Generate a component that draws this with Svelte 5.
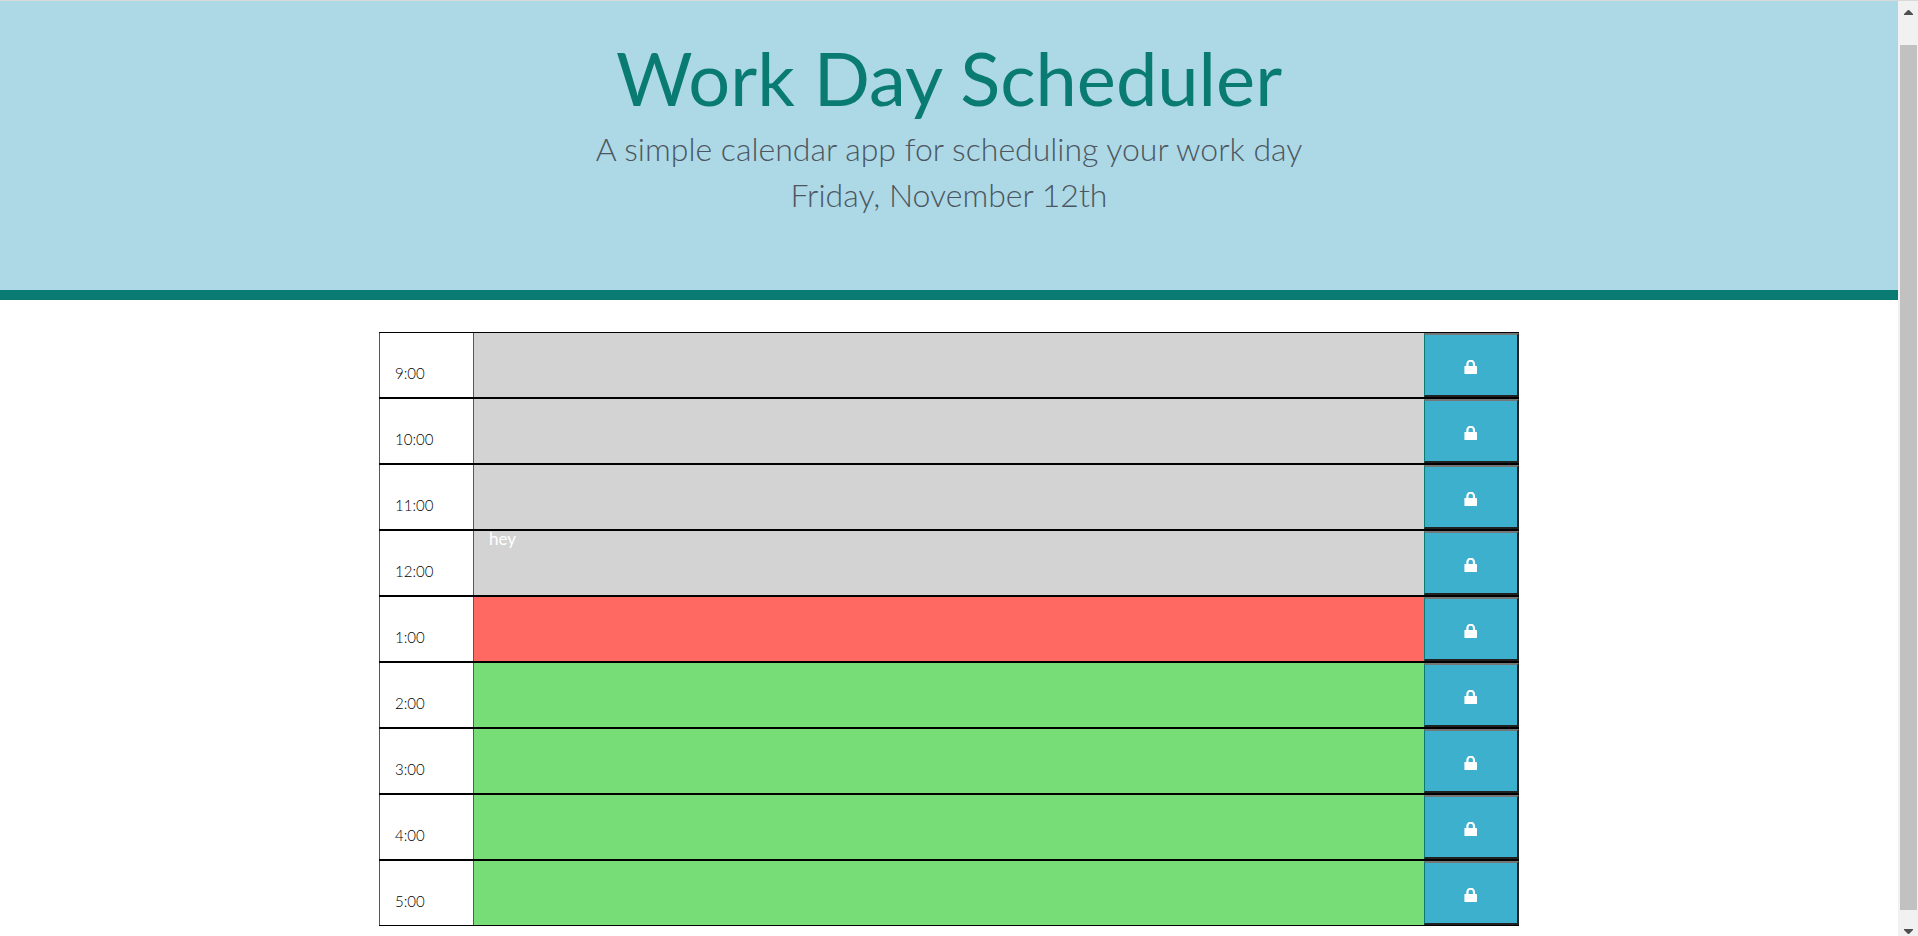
<script>
  let slots = $state([
    { time: '9:00', phase: 'past', note: '' },
    { time: '10:00', phase: 'past', note: '' },
    { time: '11:00', phase: 'past', note: '' },
    { time: '12:00', phase: 'past', note: 'hey' },
    { time: '1:00', phase: 'present', note: '' },
    { time: '2:00', phase: 'future', note: '' },
    { time: '3:00', phase: 'future', note: '' },
    { time: '4:00', phase: 'future', note: '' },
    { time: '5:00', phase: 'future', note: '' },
  ]);
</script>

<div class="window">
  <div class="page">
    <header>
      <h1>Work Day Scheduler</h1>
      <p>A simple calendar app for scheduling your work day</p>
      <p>Friday, November 12th</p>
    </header>
    <main>
      {#each slots as slot, i}
        <div class="row">
          <label class="hour" for="slot-{i}">{slot.time}</label>
          <textarea id="slot-{i}" class={slot.phase} bind:value={slot.note}></textarea>
          <button type="button" aria-label="Save {slot.time}">
            <svg width="14" height="14" viewBox="0 0 14 14" aria-hidden="true">
              <path d="M3.4 7V4a3.3 3.3 0 0 1 6.6 0v3" fill="none" stroke="#fff" stroke-width="2.2" />
              <rect x="0.4" y="6" width="12.6" height="8" rx="0.4" fill="#fff" />
            </svg>
          </button>
        </div>
      {/each}
    </main>
  </div>
  <div class="scrollbar" aria-hidden="true">
    <svg width="9" height="5" viewBox="0 0 9 5"><path d="M0 5V4L4 0h1l4 4v1z" fill="#505050" /></svg>
    <div class="thumb"></div>
    <svg width="9" height="5" viewBox="0 0 9 5"><path d="M0 0v1l4 4h1l4-4V0z" fill="#505050" /></svg>
  </div>
</div>

<style>
  :global(body) {
    margin: 0;
    background: #fff;
  }
  .window {
    display: flex;
    height: 100vh;
    box-sizing: border-box;
    border-top: 1px solid #d9d9d9;
    overflow: hidden;
    font-family: Lato, "Open Sans", sans-serif;
  }
  .page {
    flex: 1;
    min-width: 0;
  }
  header {
    box-sizing: border-box;
    padding: 35px 16px 72px;
    border-bottom: 10px solid #0a7b73;
    background: #add8e6;
    text-align: center;
  }
  h1 {
    margin: 0 0 6px;
    font-size: 74px;
    font-weight: 400;
    line-height: 84px;
    color: #0a7b73;
  }
  p {
    margin: 0;
    font-size: 32px;
    font-weight: 300;
    line-height: 46px;
    color: #4c565f;
  }
  main {
    max-width: 1140px;
    margin: 32px auto 0;
  }
  .row {
    display: grid;
    grid-template-columns: 1fr 10fr 1fr;
    height: 64px;
    border-top: 1px solid #000;
    border-bottom: 1px solid #000;
  }
  .hour {
    box-sizing: border-box;
    padding: 28px 15px 0;
    border: solid #0a7b73;
    border-width: 0 1px;
    font-size: 15px;
    font-weight: 300;
    line-height: 24px;
    color: #000;
  }
  textarea {
    box-sizing: border-box;
    width: 100%;
    height: 100%;
    margin: 0;
    padding: 0 15px;
    border: 0;
    resize: none;
    font: 400 17px/16px Lato, "Open Sans", sans-serif;
    color: #fff;
  }
  .past {
    background: #d3d3d3;
  }
  .present {
    background: #ff6961;
  }
  .future {
    background: #77dd77;
  }
  button {
    display: flex;
    align-items: center;
    justify-content: center;
    margin: 0;
    padding: 3px 0 0;
    border-style: solid;
    border-width: 2px 2px 2px 1px;
    border-color: #767676 #212121 #212121 #0a7b73;
    background: #3db0ce;
  }
  .scrollbar {
    display: flex;
    flex-direction: column;
    align-items: center;
    box-sizing: border-box;
    width: 20px;
    padding: 9px 1px 2px 2px;
    background: #f1f1f1;
  }
  .thumb {
    flex: 1;
    align-self: stretch;
    margin: 30px 0 19px;
    background: #c1c1c1;
  }
</style>
